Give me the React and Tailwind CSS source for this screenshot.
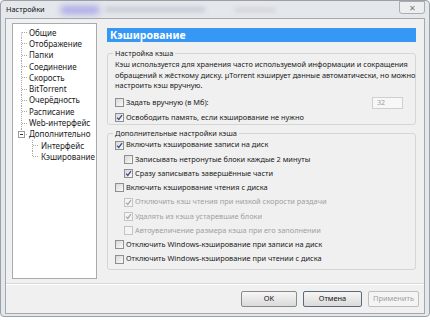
import React from "react";

const font = { fontFamily: '"Noto Sans", "Open Sans", sans-serif' };

const treeItems = [
  { label: "Общие", level: 0, first: true },
  { label: "Отображение", level: 0 },
  { label: "Папки", level: 0 },
  { label: "Соединение", level: 0 },
  { label: "Скорость", level: 0 },
  { label: "BitTorrent", level: 0 },
  { label: "Очерёдность", level: 0 },
  { label: "Расписание", level: 0 },
  { label: "Web-интерфейс", level: 0 },
  { label: "Дополнительно", level: 0, last: true, open: true },
  { label: "Интерфейс", level: 1 },
  { label: "Кэширование", level: 1, last: true },
];

function Guide({ item }) {
  const c = "#a8a8a8";
  if (item.level === 1) {
    return (
      <svg width="27" height="11" className="shrink-0">
        <line x1="19.5" y1="0" x2="19.5" y2={item.last ? 5.5 : 11} stroke={c} strokeDasharray="1 1" />
        <line x1="20" y1="5.5" x2="25" y2="5.5" stroke={c} strokeDasharray="1 1" />
      </svg>
    );
  }
  return (
    <svg width="15" height="11" className="shrink-0">
      <line x1="8.5" y1={item.first ? 5.5 : 0} x2="8.5" y2={item.last ? 5.5 : 11} stroke={c} strokeDasharray="1 1" />
      <line x1="9" y1="5.5" x2="14" y2="5.5" stroke={c} strokeDasharray="1 1" />
      {item.open && (
        <g>
          <rect x="5.5" y="2.5" width="6" height="6" fill="#fff" stroke="#9a9a9a" />
          <line x1="7" y1="5.5" x2="10" y2="5.5" stroke="#333" />
        </g>
      )}
    </svg>
  );
}

function Check({ checked, disabled }) {
  return (
    <span
      className={
        "w-[9px] h-[9px] shrink-0 border flex items-center justify-center " +
        (disabled
          ? "border-[#c4c4c4] bg-[#f4f4f4]"
          : "border-[#8f8f8f] bg-gradient-to-br from-[#d8d8d8] to-[#fafafa]")
      }
    >
      {checked && (
        <svg width="7" height="7" viewBox="0 0 7 7">
          <path
            d="M1 3.6 L2.8 5.5 L6 1.2"
            fill="none"
            stroke={disabled ? "#a8a8a8" : "#3a4f86"}
            strokeWidth="1.3"
          />
        </svg>
      )}
    </span>
  );
}

function Row({ label, checked, disabled, indent }) {
  return (
    <div className={"flex items-center h-[14.25px] gap-[2px] " + (indent ? "pl-[16px]" : "pl-[7px]")}>
      <Check checked={checked} disabled={disabled} />
      <span className={disabled ? "text-[#a0a0a0]" : "text-[#1a1a1a]"}>{label}</span>
    </div>
  );
}

function Btn({ children, w, disabled, focus }) {
  return (
    <button
      className={
        "h-[16px] rounded-[2px] border text-[7.4px] bg-gradient-to-b " +
        w +
        (disabled
          ? " border-[#bfbfbf] from-[#f4f4f4] to-[#f4f4f4] text-[#a0a0a0]"
          : focus
          ? " border-[#5a6a7a] from-[#f6f6f6] to-[#dadada] text-[#111]"
          : " border-[#8a8a8a] from-[#f6f6f6] to-[#dadada] text-[#111]")
      }
    >
      {children}
    </button>
  );
}

export default function App() {
  return (
    <div className="w-[430px] h-[320px] bg-white overflow-hidden text-[7.4px] leading-none" style={font}>
      <div className="w-[430px] h-[317px] bg-[#e4e7eb] border border-[#9aa0a6] rounded-[4px]">
        <div className="h-[17px] flex items-center pl-[5px]">
          <span className="text-[7.4px] text-[#111]">Настройки</span>
          <span className="ml-[16px] w-[38px] h-[8px] bg-[#a9a9e6] blur-[3px]" />
          <span className="ml-[6px] w-[100px] h-[5px] bg-[#c8ccd6] blur-[2px]" />
          <span className="ml-[30px] w-[40px] h-[4px] bg-[#cfd2d8] blur-[2px]" />
          <span className="ml-auto mr-[4px] w-[26px] h-[13px] -mt-[4px] border border-[#a9adb2] rounded-b-[3px] bg-[#eceef0] flex items-center justify-center text-[#777] text-[8px]">
            ✕
          </span>
        </div>
        <div className="ml-[4px] w-[420px] h-[296px] bg-[#f0f0f0] border border-[#a4a9ae]">
          <div className="flex h-[264px]">
            <div className="ml-[6px] mt-[4px] w-[85px] h-[256px] bg-white border border-[#a9abad] pt-[3px] text-[#1a1a1a] text-[8px]">
              {treeItems.map((it) => (
                <div key={it.label} className="flex items-center h-[11.3px]">
                  <Guide item={it} />
                  <span className="ml-[1px] whitespace-nowrap">{it.label}</span>
                </div>
              ))}
            </div>
            <div className="ml-[10px] mt-[9px] w-[309px]">
              <div className="h-[14px] bg-[#3797f5] flex items-center pl-[3px] text-white font-bold text-[10.5px]">
                Кэширование
              </div>
              <fieldset className="mt-[6px] h-[77px] border border-[#d5d5d5] rounded-[3px] px-[0px] min-w-0">
                <legend className="ml-[5px] px-[2px] text-[#1a1a1a] leading-[10px]">Настройка кэша</legend>
                <p className="pl-[7px] pt-[1px] leading-[10.5px] text-[#1a1a1a] whitespace-nowrap">
                  Кэш используется для хранения часто используемой информации и сокращения
                  <br />
                  обращений к жёсткому диску. µTorrent кэширует данные автоматически, но можно
                  <br />
                  настроить кэш вручную.
                </p>
                <div className="flex items-center h-[16px] mt-[4px] pl-[7px] gap-[2px] pr-[12px]">
                  <Check />
                  <span className="text-[#1a1a1a]">Задать вручную (в Мб):</span>
                  <span className="ml-auto w-[31px] h-[12px] border border-[#cfcfcf] bg-[#f7f7f7] text-[#9a9a9a] text-[7px] flex items-center pl-[4px]">
                    32
                  </span>
                </div>
                <Row label="Освободить память, если кэширование не нужно" checked />
              </fieldset>
              <fieldset className="mt-[3px] h-[142px] border border-[#d5d5d5] rounded-[3px] min-w-0">
                <legend className="ml-[5px] px-[2px] text-[#1a1a1a] leading-[10px]">Дополнительные настройки кэша</legend>
                <Row label="Включить кэширование записи на диск" checked />
                <Row label="Записывать нетронутые блоки каждые 2 минуты" indent />
                <Row label="Сразу записывать завершённые части" checked indent />
                <Row label="Включить кэширование чтения с диска" />
                <Row label="Отключить кэш чтения при низкой скорости раздачи" checked disabled indent />
                <Row label="Удалять из кэша устаревшие блоки" checked disabled indent />
                <Row label="Автоувеличение размера кэша при его заполнении" disabled indent />
                <Row label="Отключить Windows-кэширование при записи на диск" />
                <Row label="Отключить Windows-кэширование при чтении с диска" />
              </fieldset>
            </div>
          </div>
          <div className="border-t border-[#d8d8d8] border-b border-b-white" />
          <div className="flex justify-end gap-[6px] pr-[5px] mt-[6px]">
            <Btn w="w-[56px]">OK</Btn>
            <Btn w="w-[59px]" focus>Отмена</Btn>
            <Btn w="w-[51px]" disabled>Применить</Btn>
          </div>
        </div>
      </div>
    </div>
  );
}
